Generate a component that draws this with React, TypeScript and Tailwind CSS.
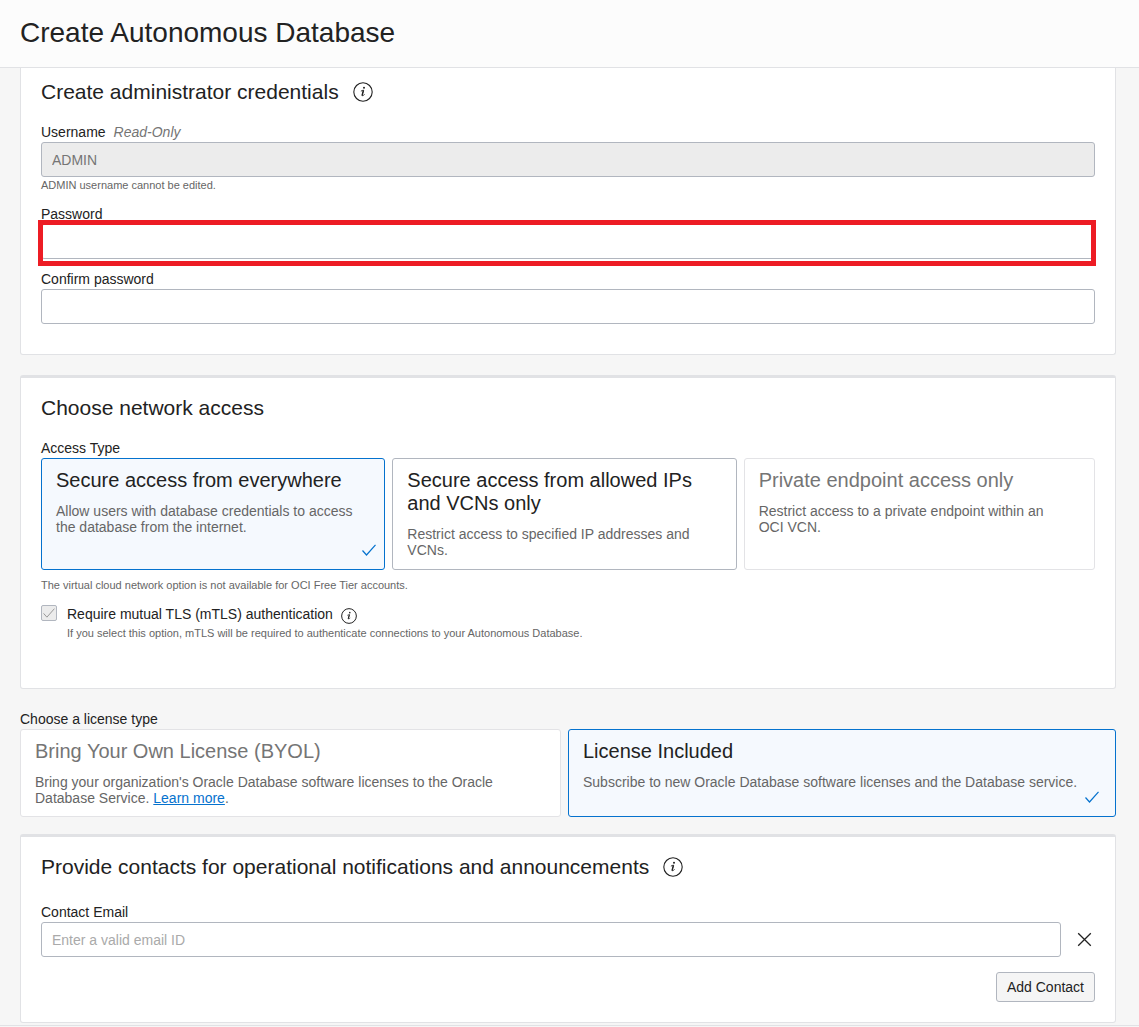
import type { ReactNode } from "react";

const inputClass =
  "block h-[35px] w-full rounded-[3px] border border-[#b1b6bf] bg-white px-2.5 text-sm text-[#222] placeholder:text-[#aaa] outline-none";

function InfoButton({ label, small = false }: { label: string; small?: boolean }) {
  return (
    <button type="button" aria-label={label} className="shrink-0 text-[#222]">
      <svg viewBox="0 0 20 20" className={small ? "block size-4" : "block size-5"} fill="none">
        <circle cx="10" cy="10" r="9.2" stroke="currentColor" strokeWidth={small ? 1.25 : 1.1} />
        <circle cx="11" cy="5.8" r="1" fill="currentColor" />
        <path
          d="M7.9 9.2 Q9 8.3 10.7 8.2 L9.3 13 Q9.1 14.2 10 13.7 Q10.8 13.2 11.5 12.3"
          stroke="currentColor"
          strokeWidth="0.9"
        />
        <path d="M10.3 8.5 L9 13.6" stroke="currentColor" strokeWidth="1.3" />
      </svg>
    </button>
  );
}

function CheckMark({ className }: { className: string }) {
  return (
    <svg viewBox="0 0 14 12" className={className} fill="none" stroke="currentColor" aria-hidden="true">
      <path d="M0.5 6.5 L4.5 11 L13.5 0.8" strokeWidth="1.2" />
    </svg>
  );
}

function Heading({ children, info }: { children: ReactNode; info?: string }) {
  return (
    <div className="flex items-center gap-3.5">
      <h2 className="text-[21px] leading-6">{children}</h2>
      {info && <InfoButton label={info} />}
    </div>
  );
}

function Choice({
  title,
  children,
  state,
  checkClass = "",
}: {
  title: string;
  children: ReactNode;
  state: "selected" | "normal" | "disabled";
  checkClass?: string;
}) {
  const look = {
    selected: "border-[#0572ce] bg-[#f5f9fe]",
    normal: "border-[#b1b6bf] bg-white",
    disabled: "border-[#e3e3e6] bg-white",
  }[state];
  return (
    <div
      role="radio"
      aria-checked={state === "selected"}
      aria-disabled={state === "disabled"}
      tabIndex={state === "disabled" ? -1 : 0}
      className={"relative h-full rounded-[3px] border py-2.5 pr-6 pl-3.5 " + look}
    >
      <h3 className={"mb-[11px] text-xl leading-[23px] " + (state === "disabled" ? "text-[#757575]" : "")}>
        {title}
      </h3>
      <p className="text-sm leading-4 text-[#666]">{children}</p>
      {state === "selected" && (
        <CheckMark className={"absolute bottom-[13px] h-3 w-3.5 text-[#0572ce] " + checkClass} />
      )}
    </div>
  );
}

export default function App() {
  return (
    <div className="min-h-screen bg-[#f6f6f6] font-['Liberation_Sans',Arial,sans-serif] text-sm text-[#222]">
      <header className="border-b border-[#e1e2e5] bg-[#fcfcfc] px-5 pt-[17px] pb-[18px]">
        <h1 className="text-[28px] leading-8">Create Autonomous Database</h1>
      </header>

      <form className="border-b border-[#e1e2e5] pr-[23px] pb-0.5 pl-5" onSubmit={(e) => e.preventDefault()}>
        <section className="rounded-b-[3px] border border-t-0 border-[#e1e2e5] bg-white px-5 pt-3 pb-[30px]">
          <Heading info="About administrator credentials">Create administrator credentials</Heading>
          <div className="mt-[18px] flex gap-2 leading-5">
            <label htmlFor="username">Username</label>
            <span className="text-[#757575] italic">Read-Only</span>
          </div>
          <input
            id="username"
            readOnly
            value="ADMIN"
            className="block h-[35px] w-full rounded-[3px] border border-[#b1b6bf] bg-[#ececec] px-2.5 text-sm text-[#757575] outline-none"
          />
          <p className="text-[11px] leading-4 text-[#666]">ADMIN username cannot be edited.</p>

          <label htmlFor="password" className="mt-[11px] block leading-5">
            Password
          </label>
          <div className="relative">
            <input id="password" type="password" className={inputClass} />
            <div className="pointer-events-none absolute -top-1 -right-px -bottom-[7px] -left-[3px] border-5 border-[#ed1c24]" />
          </div>

          <label htmlFor="confirm" className="mt-2.5 block leading-5">
            Confirm password
          </label>
          <input id="confirm" type="password" className={inputClass} />
        </section>

        <section className="mt-5 rounded-[3px] border border-t-3 border-[#e1e2e5] bg-white px-5 pt-[18px] pb-[47px]">
          <Heading>Choose network access</Heading>
          <div id="access-type" className="mt-[18px] leading-5">
            Access Type
          </div>
          <div role="radiogroup" aria-labelledby="access-type" className="flex min-h-28">
            <div className="w-1/3 pr-[7px]">
              <Choice title="Secure access from everywhere" state="selected" checkClass="right-2">
                Allow users with database credentials to access the database from the internet.
              </Choice>
            </div>
            <div className="w-1/3 pr-[7px]">
              <Choice title="Secure access from allowed IPs and VCNs only" state="normal">
                Restrict access to specified IP addresses and VCNs.
              </Choice>
            </div>
            <div className="w-1/3">
              <Choice title="Private endpoint access only" state="disabled">
                Restrict access to a private endpoint within an OCI VCN.
              </Choice>
            </div>
          </div>
          <p className="mt-[7px] text-[11px] leading-4 text-[#666]">
            The virtual cloud network option is not available for OCI Free Tier accounts.
          </p>
          <div className="mt-[11px] flex gap-2.5">
            <span className="relative mt-px size-4">
              <input
                id="mtls"
                type="checkbox"
                checked
                disabled
                readOnly
                className="block size-4 appearance-none rounded-[2px] border border-[#b1b6bf] bg-[#ececec]"
              />
              <CheckMark className="pointer-events-none absolute top-[3px] left-0.5 h-2.5 w-3 text-[#999]" />
            </span>
            <div>
              <div className="flex items-end gap-2">
                <label htmlFor="mtls" className="leading-5">
                  Require mutual TLS (mTLS) authentication
                </label>
                <InfoButton label="About mutual TLS" small />
              </div>
              <p className="mt-px text-[11px] leading-4 text-[#666]">
                If you select this option, mTLS will be required to authenticate connections to your Autonomous Database.
              </p>
            </div>
          </div>
        </section>

        <div id="license-type" className="mt-5 leading-5">
          Choose a license type
        </div>
        <div role="radiogroup" aria-labelledby="license-type" className="flex">
          <div className="w-1/2 pr-[7px]">
            <Choice title="Bring Your Own License (BYOL)" state="disabled">
              Bring your organization's Oracle Database software licenses to the Oracle Database Service.{" "}
              <a href="#" className="text-[#0572ce] underline">
                Learn more
              </a>
              .
            </Choice>
          </div>
          <div className="w-1/2">
            <Choice title="License Included" state="selected" checkClass="right-4">
              Subscribe to new Oracle Database software licenses and the Database service.
            </Choice>
          </div>
        </div>

        <section className="mt-[17px] rounded-[3px] border border-t-3 border-[#e1e2e5] bg-white px-5 pt-[18px] pb-5">
          <Heading info="About contacts">Provide contacts for operational notifications and announcements</Heading>
          <label htmlFor="email" className="mt-[23px] block leading-5">
            Contact Email
          </label>
          <div className="flex items-center">
            <input id="email" type="email" placeholder="Enter a valid email ID" className={inputClass} />
            <button type="button" aria-label="Remove contact" className="mr-[3px] ml-4 shrink-0">
              <svg viewBox="0 0 15 15" className="block size-[15px]" stroke="currentColor" strokeWidth="1.3">
                <path d="M1.2 1.2 L13.8 13.8 M13.8 1.2 L1.2 13.8" />
              </svg>
            </button>
          </div>
          <div className="mt-[15px] flex justify-end">
            <button type="button" className="h-[30px] rounded-[3px] border border-[#b1b6bf] bg-[#f5f5f5] px-2.5">
              Add Contact
            </button>
          </div>
        </section>
      </form>
    </div>
  );
}
